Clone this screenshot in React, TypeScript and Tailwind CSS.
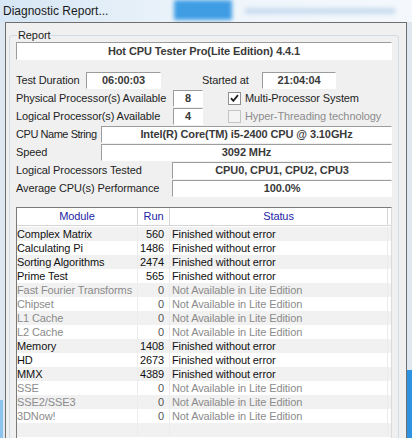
import React from 'react'

const font = { fontFamily: '"Liberation Sans", Arial, sans-serif' }

type Row = { module: string; run: number; status: string; ok: boolean }

const rows: Row[] = [
  { module: 'Complex Matrix', run: 560, status: 'Finished without error', ok: true },
  { module: 'Calculating Pi', run: 1486, status: 'Finished without error', ok: true },
  { module: 'Sorting Algorithms', run: 2474, status: 'Finished without error', ok: true },
  { module: 'Prime Test', run: 565, status: 'Finished without error', ok: true },
  { module: 'Fast Fourier Transforms', run: 0, status: 'Not Available in Lite Edition', ok: false },
  { module: 'Chipset', run: 0, status: 'Not Available in Lite Edition', ok: false },
  { module: 'L1 Cache', run: 0, status: 'Not Available in Lite Edition', ok: false },
  { module: 'L2 Cache', run: 0, status: 'Not Available in Lite Edition', ok: false },
  { module: 'Memory', run: 1408, status: 'Finished without error', ok: true },
  { module: 'HD', run: 2673, status: 'Finished without error', ok: true },
  { module: 'MMX', run: 4389, status: 'Finished without error', ok: true },
  { module: 'SSE', run: 0, status: 'Not Available in Lite Edition', ok: false },
  { module: 'SSE2/SSE3', run: 0, status: 'Not Available in Lite Edition', ok: false },
  { module: '3DNow!', run: 0, status: 'Not Available in Lite Edition', ok: false },
]

// sunken read-only field
function Field({ className, children }: { className: string; children: React.ReactNode }) {
  return (
    <div
      className={`h-[17px] shrink-0 bg-white border-t border-l border-[#9c9c9c] border-r border-b border-r-white border-b-white flex items-center justify-center font-bold text-[#3a3a3a] whitespace-nowrap ${className}`}
    >
      {children}
    </div>
  )
}

function Check({ checked, disabled }: { checked?: boolean; disabled?: boolean }) {
  return (
    <div
      className={`w-[13px] h-[13px] border flex items-center justify-center ${
        disabled ? 'border-[#c4c4c4] bg-[#f4f4f4]' : 'border-[#8e8f8f] bg-white'
      }`}
    >
      {checked && (
        <svg width="9" height="9" viewBox="0 0 9 9">
          <path d="M1 4.2 L3.3 6.8 L8 1.2" stroke="#222" strokeWidth="1.8" fill="none" />
        </svg>
      )}
    </div>
  )
}

export default function App() {
  return (
    <div className="relative w-[412px] h-[438px] overflow-hidden bg-[#dfe8f1] text-[11px] tracking-[-0.1px] text-[#1e1e1e]" style={font}>
      {/* blurred desktop behind the aero frame */}
      <div className="absolute left-0 top-0 w-[412px] h-[22px] bg-gradient-to-r from-[#d6e6f4] via-[#eef5fb] to-[#f4f8fc]" />
      <div className="absolute left-[174px] top-0 w-[58px] h-[20px] bg-[#3f9de4] blur-[2px]" />
      <div className="absolute left-[245px] top-[8px] w-[150px] h-[6px] bg-[#c9dcef] blur-[2px]" />
      <div className="absolute right-0 top-[370px] w-[5px] h-[68px] bg-[#2f93e2]" />
      <div className="absolute left-0 top-[400px] w-[3px] h-[38px] bg-[#8cc4ef]" />

      <div className="relative h-[22px] pl-[3px] flex items-center text-[12px] tracking-normal text-[#1a1a1a]">Diagnostic Report...</div>

      <div className="relative ml-[5px] w-[402px] h-[420px] border border-[#6f6f6f] bg-[#f0f0f0] pl-[3px] pt-[6px]">
        <fieldset className="w-[390px] h-[420px] border border-[#d2dbe2] rounded-[3px] pl-[6px] pr-[5px] pb-0 m-0">
          <legend className="ml-[1px] px-[1px] leading-[12px] text-[#1e1e1e]">Report</legend>

          <Field className="w-[376px] mt-[1px] h-[18px]">Hot CPU Tester Pro(Lite Edition) 4.4.1</Field>

          <div className="mt-[12px] flex flex-col gap-[1px] whitespace-nowrap">
            <div className="flex items-center h-[17px]">
              <span className="w-[70px] shrink-0">Test Duration</span>
              <Field className="w-[75px]">06:00:03</Field>
              <span className="ml-[41px] w-[60px] shrink-0">Started at</span>
              <Field className="w-[74px]">21:04:04</Field>
            </div>
            <div className="flex items-center h-[17px]">
              <span className="w-[157px] shrink-0">Physical Processor(s) Available</span>
              <Field className="w-[30px]">8</Field>
              <div className="ml-[25px]"><Check checked /></div>
              <span className="ml-[4px]">Multi-Processor System</span>
            </div>
            <div className="flex items-center h-[17px]">
              <span className="w-[157px] shrink-0">Logical Processor(s) Available</span>
              <Field className="w-[30px]">4</Field>
              <div className="ml-[25px]"><Check disabled /></div>
              <span className="ml-[4px] text-[#8d8d8d]">Hyper-Threading technology</span>
            </div>
            <div className="flex items-center h-[17px]">
              <span className="w-[85px] shrink-0 tracking-[-0.45px]">CPU Name String</span>
              <Field className="w-[291px]">Intel(R) Core(TM) i5-2400 CPU @ 3.10GHz</Field>
            </div>
            <div className="flex items-center h-[17px]">
              <span className="w-[85px] shrink-0">Speed</span>
              <Field className="w-[291px]">3092 MHz</Field>
            </div>
            <div className="flex items-center h-[17px]">
              <span className="w-[156px] shrink-0">Logical Processors Tested</span>
              <Field className="w-[220px]">CPU0, CPU1, CPU2, CPU3</Field>
            </div>
            <div className="flex items-center h-[17px]">
              <span className="w-[156px] shrink-0">Average CPU(s) Performance</span>
              <Field className="w-[220px]">100.0%</Field>
            </div>
          </div>

          {/* list view */}
          <div className="mt-[10px] w-[376px] h-[240px] bg-white border-t border-l border-[#7a7a7a] border-r border-r-[#dcdcdc] overflow-hidden">
            <div className="flex h-[18px] border-b border-[#d5d5d5] text-[#2424a6]">
              <div className="w-[121px] flex items-center justify-center border-r border-[#d5d5d5]">Module</div>
              <div className="w-[32px] flex items-center justify-center border-r border-[#d5d5d5]">Run</div>
              <div className="w-[218px] flex items-center justify-center border-r border-[#d5d5d5]">Status</div>
            </div>
            <div className="pt-[1px]">
              {rows.concat([{ module: '', run: -1, status: '', ok: true }]).map((r, i) => (
                <div
                  key={i}
                  className={`flex h-[14px] leading-[14px] ${i % 2 === 0 ? 'bg-[#f1f1f1]' : 'bg-white'} ${
                    r.ok ? 'text-[#111]' : 'text-[#8b8b8b]'
                  }`}
                >
                  <div className="w-[121px] border-r border-[#ececec] whitespace-nowrap overflow-hidden">{r.module}</div>
                  <div className={`w-[32px] border-r border-[#ececec] text-right pr-[5px] ${r.ok ? '' : 'text-[#555]'}`}>
                    {r.run >= 0 ? r.run : ''}
                  </div>
                  <div className="w-[218px] border-r border-[#ececec] pl-[2px] whitespace-nowrap">{r.status}</div>
                </div>
              ))}
            </div>
          </div>
        </fieldset>
      </div>
    </div>
  )
}
